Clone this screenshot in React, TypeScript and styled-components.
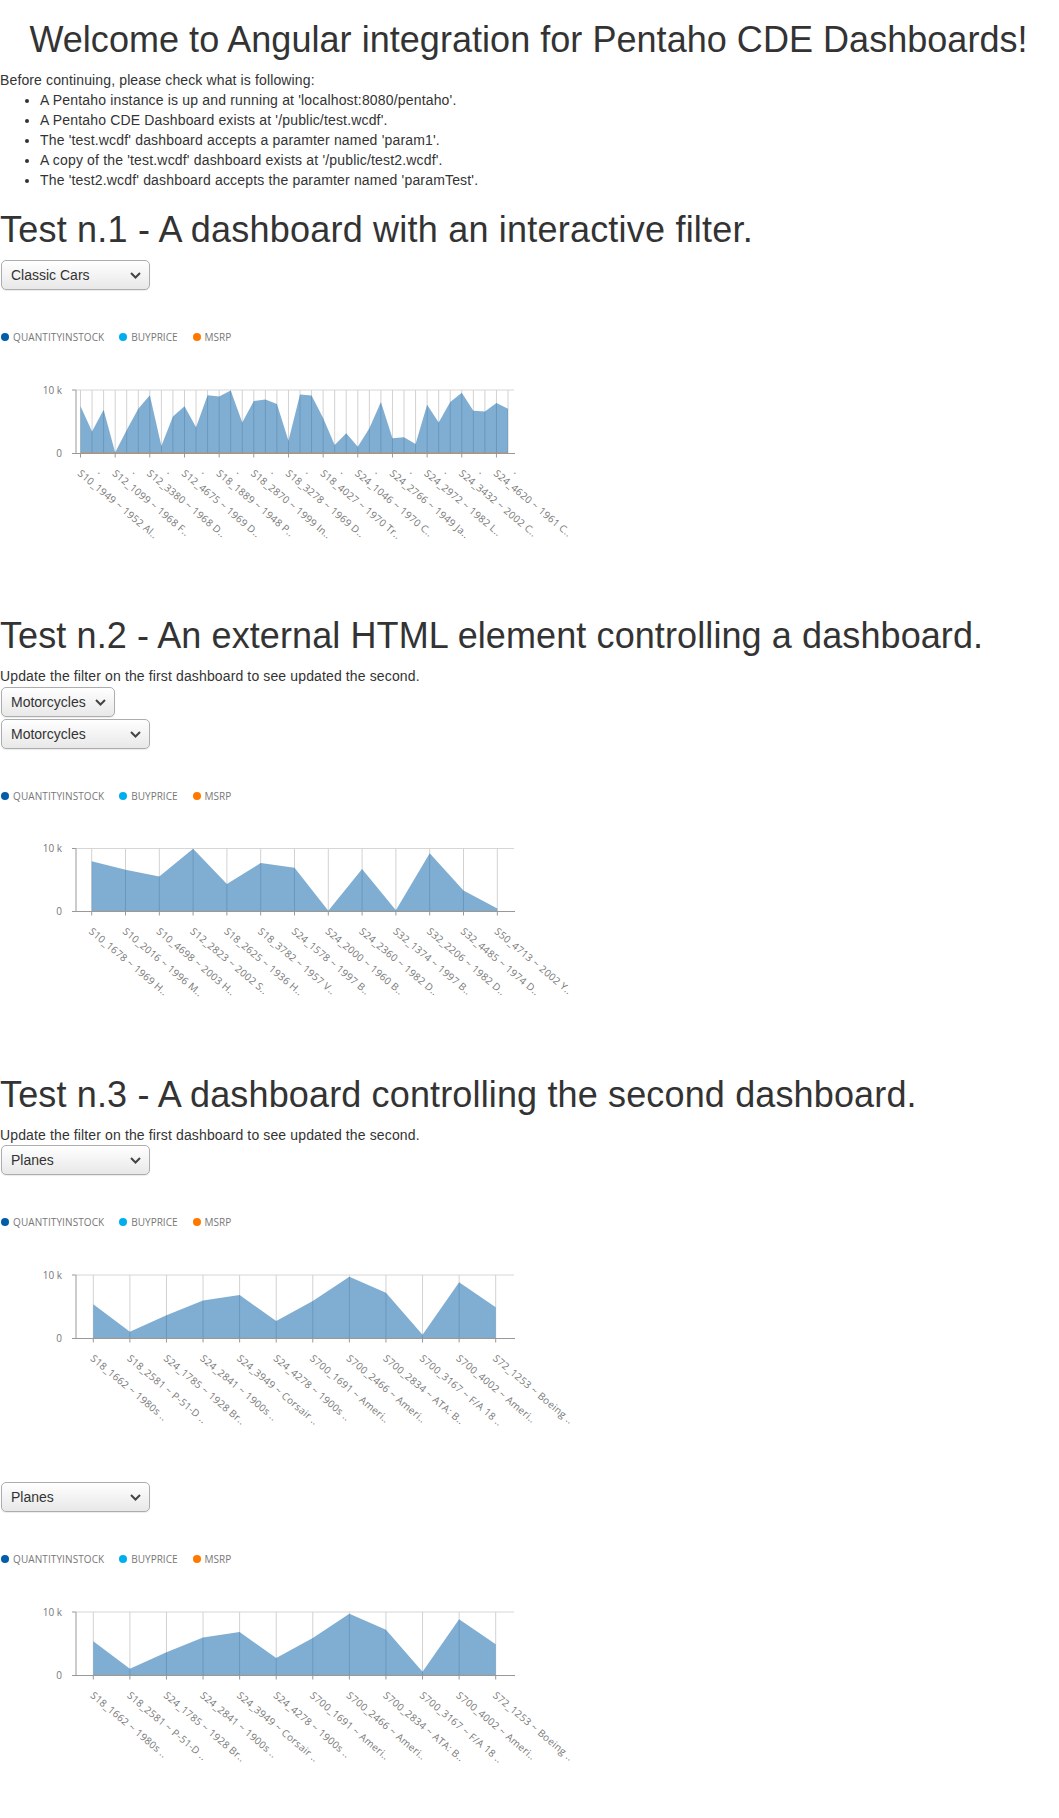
import React from 'react';
import styled, { createGlobalStyle } from 'styled-components';

const GlobalStyle = createGlobalStyle`
  body {
    margin: 0;
    background: #fff;
    font-family: 'Liberation Sans', Arial, sans-serif;
    font-size: 14px;
    line-height: 20px;
    color: #333;
  }
`;

const Page = styled.div`
  width: 1059px;
`;

const Title = styled.h1<{ $centered?: boolean; $tracking: number }>`
  margin: 20px 0 10px;
  padding-right: ${(props) => (props.$centered ? 2 : 0)}px;
  font-size: 36px;
  font-weight: 400;
  line-height: 40px;
  letter-spacing: ${(props) => props.$tracking}px;
  color: #333;
  text-align: ${(props) => (props.$centered ? 'center' : 'left')};
`;

const Note = styled.div`
  letter-spacing: 0.13px;
`;

const CheckList = styled.ul`
  margin: 0 0 10px;
  padding-left: 40px;
  letter-spacing: 0.17px;
`;

const SelectStack = styled.div`
  display: flex;
  flex-direction: column;
  align-items: flex-start;
  gap: 2px;
  margin-top: 1px;
`;

const Select = styled.div<{ $width: number }>`
  box-sizing: border-box;
  display: flex;
  align-items: center;
  justify-content: space-between;
  width: ${(props) => props.$width}px;
  height: 30px;
  margin-left: 1px;
  padding: 0 8px 0 9px;
  border: 1px solid #adadad;
  border-radius: 5px;
  background: linear-gradient(to bottom, #fff 0%, #e8e8e8 100%);
  box-shadow: 0 1px 1px rgba(0, 0, 0, 0.08);
  color: #333;
`;

const ChartBlock = styled.div<{ $height: number }>`
  height: ${(props) => props.$height}px;
`;

const Legend = styled.div`
  display: flex;
  gap: 15px;
  padding: 41px 0 0 1px;
  height: 12px;
  font-family: 'Open Sans', sans-serif;
  font-size: 10px;
  line-height: 12px;
  color: #777;
`;

const LegendItem = styled.div<{ $tracking: number }>`
  display: flex;
  align-items: center;
  gap: 4px;
  letter-spacing: ${(props) => props.$tracking}px;
`;

const Dot = styled.span<{ $color: string }>`
  width: 8px;
  height: 8px;
  border-radius: 50%;
  background: ${(props) => props.$color};
`;

const Plot = styled.svg<{ $raise: number }>`
  display: block;
  overflow: visible;
  margin-top: ${(props) => -props.$raise}px;

  text {
    font-family: 'Open Sans', sans-serif;
    font-size: 10px;
    fill: #777;
  }
`;

const TickLabel = styled.text`
  letter-spacing: 0.3px;
`;

const Chevron = () => (
  <svg width="11" height="7" viewBox="0 0 11 7">
    <path d="M1 1l4.5 4.5L10 1" fill="none" stroke="#444" strokeWidth="2" />
  </svg>
);

const series = [
  { name: 'QUANTITYINSTOCK', color: '#005da6', tracking: 0.1 },
  { name: 'BUYPRICE', color: '#00aeef', tracking: 0 },
  { name: 'MSRP', color: '#ff7800', tracking: 0 },
];

const PLOT_BASE = 110.5;
const AXIS_X = 76;
const PLOT_RIGHT = 514;
const SCALE_MAX = 9800;

type ChartProps = {
  values: number[];
  labels: string[];
  xStart: number;
  xEnd: number;
  labelEvery?: number;
  height: number;
  dots?: boolean;
  plotTop?: number;
  raise?: number;
};

const Chart = ({
  values,
  labels,
  xStart,
  xEnd,
  labelEvery = 1,
  height,
  dots,
  plotTop = 47,
  raise = 0,
}: ChartProps) => {
  const step = (xEnd - xStart) / (values.length - 1);
  const xs = values.map((_, i) => xStart + i * step);
  const yOf = (value: number) => PLOT_BASE - (value / SCALE_MAX) * (PLOT_BASE - plotTop);
  const area = [
    `${xStart},${PLOT_BASE}`,
    ...values.map((value, i) => `${xs[i]},${yOf(value)}`),
    `${xEnd},${PLOT_BASE}`,
  ].join(' ');
  const tickXs = xs.filter((_, i) => i % labelEvery === 0);

  return (
    <ChartBlock $height={height}>
      <Legend>
        {series.map((item) => (
          <LegendItem key={item.name} $tracking={item.tracking}>
            <Dot $color={item.color} />
            {item.name}
          </LegendItem>
        ))}
      </Legend>
      <Plot width="600" height="220" $raise={raise}>
        <line x1={AXIS_X} x2={PLOT_RIGHT} y1={plotTop} y2={plotTop} stroke="#d6d6d6" />
        {xs.map((x) => (
          <line key={x} x1={x} x2={x} y1={plotTop} y2={PLOT_BASE} stroke="#d2d2d2" />
        ))}
        <polygon points={area} fill="#005da6" fillOpacity="0.5" />
        <rect
          x={xStart}
          y={PLOT_BASE - 1.5}
          width={xEnd - xStart}
          height="1.5"
          fill="#ff7800"
          fillOpacity={dots ? 0.35 : 0.08}
        />
        <line x1={AXIS_X} x2={AXIS_X} y1={plotTop} y2={PLOT_BASE} stroke="#999" />
        <line x1="72" x2={AXIS_X} y1={plotTop} y2={plotTop} stroke="#999" />
        <line x1="72" x2={PLOT_RIGHT + 1} y1={PLOT_BASE} y2={PLOT_BASE} stroke="#999" />
        <text x="62" y={plotTop + 3.5} textAnchor="end">
          10 k
        </text>
        <text x="62" y={PLOT_BASE + 3.5} textAnchor="end">
          0
        </text>
        {tickXs.map((x) => (
          <line key={x} x1={x} x2={x} y1={PLOT_BASE} y2={PLOT_BASE + 4} stroke="#999" />
        ))}
        {tickXs.map((x, i) => (
          <TickLabel
            key={labels[i]}
            transform={`translate(${x - 3.5} ${PLOT_BASE + 21}) rotate(40)`}
          >
            {labels[i]}
          </TickLabel>
        ))}
        {dots &&
          tickXs.map((x) => (
            <text key={x} x={x + 17} y={PLOT_BASE + 20}>
              .
            </text>
          ))}
      </Plot>
    </ChartBlock>
  );
};

const classicCars = [
  7280, 3380, 6760, 156, 3640, 6916, 8996, 1144, 5720, 7280, 4056, 8996, 8788, 9724, 4784, 8112,
  8320, 7644, 1976, 9100, 8944, 5460, 1300, 3120, 1040, 3900, 7956, 2340, 2496, 1456, 7540, 4784,
  7956, 9360, 6604, 6500, 7800, 6916,
];
const classicLabels = [
  'S10_1949 ~ 1952 Al..',
  'S12_1099 ~ 1968 F..',
  'S12_3380 ~ 1968 D..',
  'S12_4675 ~ 1969 D..',
  'S18_1889 ~ 1948 P..',
  'S18_2870 ~ 1999 In..',
  'S18_3278 ~ 1969 D..',
  'S18_4027 ~ 1970 Tr..',
  'S24_1046 ~ 1970 C..',
  'S24_2766 ~ 1949 Ja..',
  'S24_2972 ~ 1982 L..',
  'S24_3432 ~ 2002 C..',
  'S24_4620 ~ 1961 C..',
];

const motorcycles = [7800, 6500, 5460, 9776, 4264, 7540, 6812, 104, 6604, 208, 9048, 3276, 468];
const motorcycleLabels = [
  'S10_1678 ~ 1969 H..',
  'S10_2016 ~ 1996 M..',
  'S10_4698 ~ 2003 H..',
  'S12_2823 ~ 2002 S..',
  'S18_2625 ~ 1936 H..',
  'S18_3782 ~ 1957 V..',
  'S24_1578 ~ 1997 B..',
  'S24_2000 ~ 1960 B..',
  'S24_2360 ~ 1982 D..',
  'S32_1374 ~ 1997 B..',
  'S32_2206 ~ 1982 D..',
  'S32_4485 ~ 1974 D..',
  'S50_4713 ~ 2002 Y..',
];

const planes = [5304, 1040, 3588, 5876, 6708, 2704, 5772, 9516, 7072, 572, 8684, 4836];
const planeLabels = [
  'S18_1662 ~ 1980s ..',
  'S18_2581 ~ P-51-D ..',
  'S24_1785 ~ 1928 Br..',
  'S24_2841 ~ 1900s ..',
  'S24_3949 ~ Corsair ..',
  'S24_4278 ~ 1900s ..',
  'S700_1691 ~ Ameri..',
  'S700_2466 ~ Ameri..',
  'S700_2834 ~ ATA: B..',
  'S700_3167 ~ F/A 18 ..',
  'S700_4002 ~ Ameri..',
  'S72_1253 ~ Boeing ..',
];

const App = () => (
  <Page>
    <GlobalStyle />
    <Title $centered $tracking={0.04}>
      Welcome to Angular integration for Pentaho CDE Dashboards!
    </Title>
    <Note>Before continuing, please check what is following:</Note>
    <CheckList>
      <li>A Pentaho instance is up and running at 'localhost:8080/pentaho'.</li>
      <li>A Pentaho CDE Dashboard exists at '/public/test.wcdf'.</li>
      <li>The 'test.wcdf' dashboard accepts a paramter named 'param1'.</li>
      <li>A copy of the 'test.wcdf' dashboard exists at '/public/test2.wcdf'.</li>
      <li>The 'test2.wcdf' dashboard accepts the paramter named 'paramTest'.</li>
    </CheckList>

    <Title $tracking={0.21}>Test n.1 - A dashboard with an interactive filter.</Title>
    <Select $width={149}>
      Classic Cars
      <Chevron />
    </Select>
    <Chart
      values={classicCars}
      labels={classicLabels}
      xStart={80.5}
      xEnd={508}
      labelEvery={3}
      height={306}
      dots
    />

    <Title $tracking={0.1}>Test n.2 - An external HTML element controlling a dashboard.</Title>
    <Note>Update the filter on the first dashboard to see updated the second.</Note>
    <SelectStack>
      <Select $width={114}>
        Motorcycles
        <Chevron />
      </Select>
      <Select $width={149}>
        Motorcycles
        <Chevron />
      </Select>
    </SelectStack>
    <Chart
      values={motorcycles}
      labels={motorcycleLabels}
      xStart={91.7}
      xEnd={497.3}
      height={306}
      plotTop={47.5}
      raise={1}
    />

    <Title $tracking={0.145}>Test n.3 - A dashboard controlling the second dashboard.</Title>
    <Note>Update the filter on the first dashboard to see updated the second.</Note>
    <Select $width={149}>
      Planes
      <Chevron />
    </Select>
    <Chart values={planes} labels={planeLabels} xStart={93.3} xEnd={495.7} height={307} />
    <Select $width={149}>
      Planes
      <Chevron />
    </Select>
    <Chart values={planes} labels={planeLabels} xStart={93.3} xEnd={495.7} height={306} />
  </Page>
);

export default App;
